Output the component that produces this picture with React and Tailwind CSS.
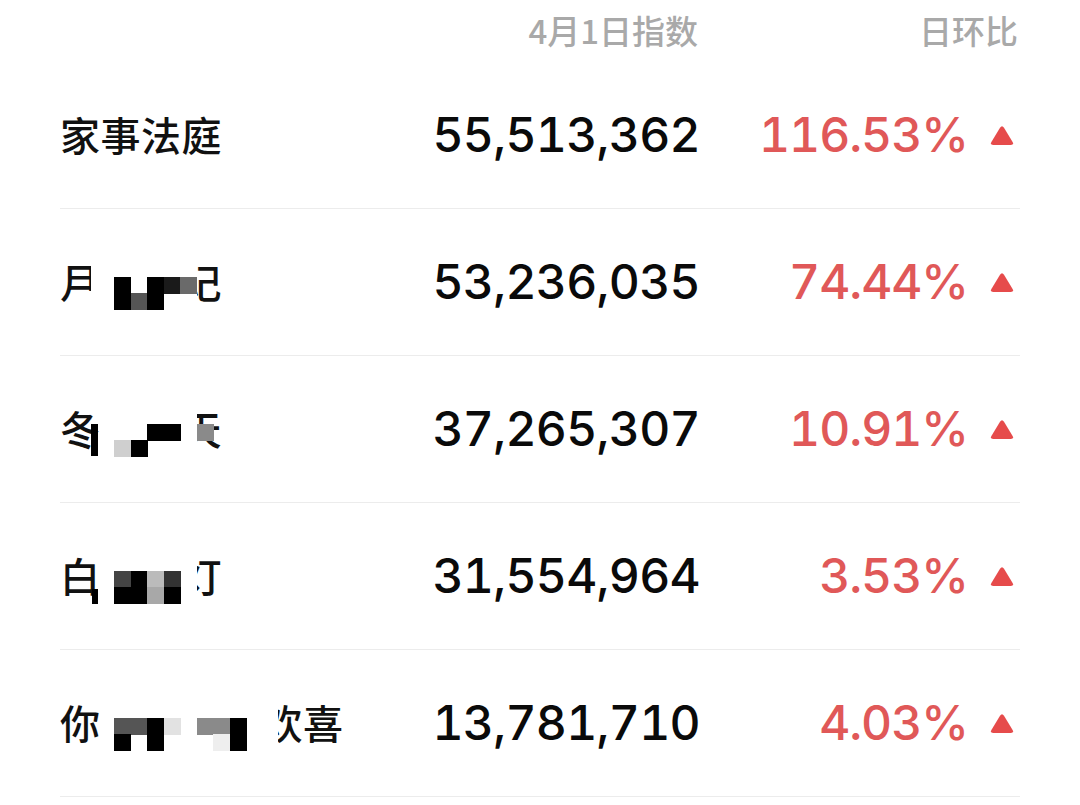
const rows = [
  {
    name: "家事法庭",
    value: "55,513,362",
    change: "116.53%",
    covers: [],
    cells: [],
  },
  {
    name: "月　　记",
    value: "53,236,035",
    change: "74.44%",
    covers: [{ x: 31, y: -6, w: 106, h: 58 }, { x: 121, y: -6, w: 16, h: 58 }, { x: 20, y: 30, w: 20, h: 20 }],
    cells: [
      [0, 0, "#000"], [0, 1, "#000"],
      [1, 1, "#555"],
      [2, 0, "#000"], [2, 1, "#000"],
      [3, 0, "#1a1a1a"],
      [4, 0, "#6a6a6a"],
    ],
    extra: [],
  },
  {
    name: "冬　　天",
    value: "37,265,307",
    change: "10.91%",
    covers: [{ x: 39, y: -6, w: 98, h: 58 }],
    cells: [
      [0, 1, "#cfcfcf"],
      [1, 1, "#000"],
      [2, 0, "#000"], [3, 0, "#000"],
      [5, 0, "#8a8a8a"],
    ],
    extra: [{ x: 31, y: 16, w: 7, h: 32, c: "#000" }],
  },
  {
    name: "白　　灯",
    value: "31,554,964",
    change: "3.53%",
    covers: [{ x: 38, y: -6, w: 99, h: 58 }],
    cells: [
      [0, 0, "#444"], [0, 1, "#000"],
      [1, 0, "#000"], [1, 1, "#000"],
      [2, 0, "#bbb"], [2, 1, "#a8a8a8"],
      [3, 0, "#333"], [3, 1, "#000"],
    ],
    extra: [{ x: 32, y: 34, w: 6, h: 15, c: "#000" }],
  },
  {
    name: "你　　　　欢喜",
    value: "13,781,710",
    change: "4.03%",
    covers: [{ x: 40, y: -6, w: 178, h: 58 }],
    cells: [
      [0, 0, "#555"], [0, 1, "#000"],
      [1, 0, "#555"],
      [2, 0, "#000"], [2, 1, "#000"],
      [3, 0, "#e2e2e2"],
      [5, 0, "#8a8a8a"],
      [6, 0, "#8a8a8a"], [6, 1, "#eeeeee"],
      [7, 0, "#000"], [7, 1, "#000"],
    ],
    extra: [],
  },
];

const CELL = 16.5;

function Mosaic({ row }) {
  return (
    <>
      {row.covers.map((c, i) => (
        <span
          key={"c" + i}
          className="absolute bg-white"
          style={{ left: c.x, top: c.y, width: c.w, height: c.h }}
        />
      ))}
      {row.cells.map(([col, r, color], i) => (
        <span
          key={"m" + i}
          className="absolute"
          style={{
            left: 54 + col * CELL,
            top: 16 + r * CELL,
            width: CELL + 0.5,
            height: CELL + 0.5,
            background: color,
          }}
        />
      ))}
      {(row.extra || []).map((e, i) => (
        <span
          key={"e" + i}
          className="absolute"
          style={{ left: e.x, top: e.y, width: e.w, height: e.h, background: e.c }}
        />
      ))}
    </>
  );
}

function Triangle() {
  return (
    <svg width="24" height="21" viewBox="0 0 24 21">
      <path
        d="M10 2.8 Q12 -0.2 14 2.8 L22.6 17 Q24.2 20 20.8 20 L3.2 20 Q-0.2 20 1.4 17 Z"
        fill="#e64b4b"
      />
    </svg>
  );
}

export default function App() {
  return (
    <div className="min-h-screen bg-white px-[60px] font-['Inter','Noto_Sans_CJK_SC',sans-serif]">
      <div className="flex h-[62px] items-center text-[33px] font-medium text-[#a9a9a9] font-['Noto_Sans_CJK_SC',sans-serif]">
        <div className="flex-1" />
        <div className="w-[300px] text-right">4月1日指数</div>
        <div className="w-[322px] pr-[2px] text-right">日环比</div>
      </div>
      {rows.map((row) => (
        <div
          key={row.value}
          className="flex h-[147px] items-center border-b border-[#ececec]"
        >
          <div className="flex-1">
            <span className="relative inline-block h-[40px] text-[40px] leading-[40px] font-medium tracking-[0.5px] text-[#111] font-['Noto_Sans_CJK_SC',sans-serif]">
              {row.name}
              <Mosaic row={row} />
            </span>
          </div>
          <div className="w-[302px] text-right text-[48px] font-medium leading-none tracking-[-0.7px] tabular-nums text-[#0a0a0a]">
            {row.value}
          </div>
          <div className="w-[268px] text-right text-[48px] font-medium leading-none tracking-[-1px] tabular-nums text-[#e05858]">
            {row.change}
          </div>
          <div className="flex w-[52px] items-center pl-[22px]">
            <Triangle />
          </div>
        </div>
      ))}
    </div>
  );
}
